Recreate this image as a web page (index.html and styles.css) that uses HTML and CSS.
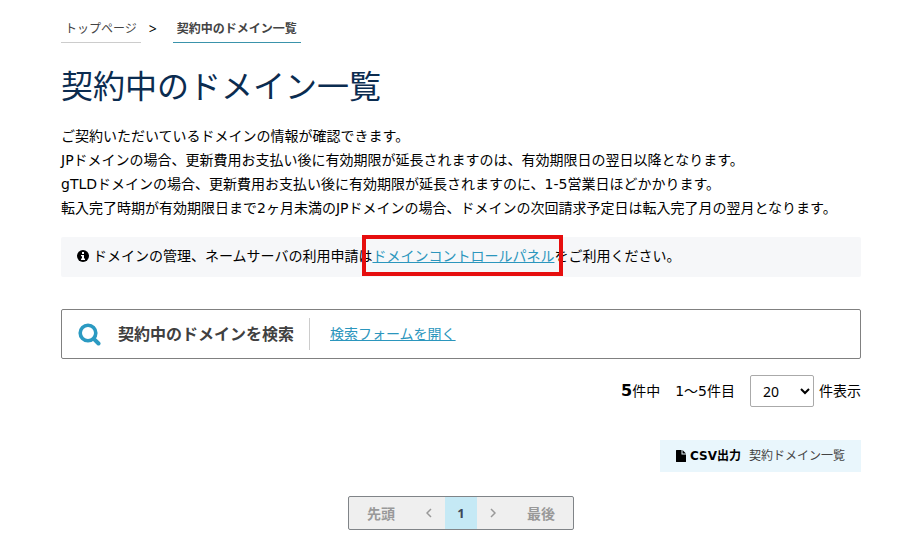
FILE: index.html
```html
<!DOCTYPE html>
<html lang="ja">
<head>
    <meta charset="UTF-8">
    <meta name="viewport" content="width=device-width, initial-scale=1.0">
    <title>契約中のドメイン一覧</title>
    <link rel="stylesheet" href="styles.css">
</head>
<body>
    <main class="container">
        <nav class="breadcrumb">
            <a href="#" class="breadcrumb-item">トップページ</a>
            <span class="breadcrumb-arrow">&gt;</span>
            <a href="#" class="breadcrumb-item current">契約中のドメイン一覧</a>
        </nav>

        <h1 class="title">契約中のドメイン一覧</h1>

        <p class="lead">
            ご契約いただいているドメインの情報が確認できます。<br>
            JPドメインの場合、更新費用お支払い後に有効期限が延長されますのは、有効期限日の翌日以降となります。<br>
            gTLDドメインの場合、更新費用お支払い後に有効期限が延長されますのに、1-5営業日ほどかかります。<br>
            転入完了時期が有効期限日まで2ヶ月未満のJPドメインの場合、ドメインの次回請求予定日は転入完了月の翌月となります。
        </p>

        <div class="notice">
            <svg class="icon-info" viewBox="0 0 12 12" aria-hidden="true">
                <circle cx="6" cy="6" r="6" fill="#000"/>
                <path d="M5 2h2v2H5zM4 5h3v3.600h1V10H4V8.600h1V6.300H4z" fill="#fff"/>
            </svg>
            <p>ドメインの管理、ネームサーバの利用申請は<span class="marked"><a href="#">ドメインコントロールパネル</a></span>をご利用ください。</p>
        </div>

        <section class="search">
            <svg class="icon-search" viewBox="0 0 24 24" aria-hidden="true">
                <circle cx="10" cy="11" r="7.800" fill="none" stroke="#2b9ac2" stroke-width="3.600"/>
                <path d="M15.800 16.800L20.500 21.500" stroke="#2b9ac2" stroke-width="4" stroke-linecap="round"/>
            </svg>
            <h2 class="search-title">契約中のドメインを検索</h2>
            <a href="#" class="search-toggle">検索フォームを開く</a>
        </section>

        <div class="count">
            <span><strong>5</strong>件中</span>
            <span>1～5件目</span>
            <label class="per-page">
                <select>
                    <option>10</option>
                    <option selected>20</option>
                    <option>50</option>
                </select>
                件表示
            </label>
        </div>

        <div class="export">
            <a href="#" class="csv">
                <svg class="icon-file" viewBox="0 0 10 12" aria-hidden="true">
                    <path d="M0 .5Q0 0 .5 0H5.500V4.500H10V11.500Q10 12 9.500 12H.5Q0 12 0 11.500zM6.500 0L10 3.500H6.500z" fill="#000"/>
                </svg>
                <strong>CSV出力</strong>
                <span>契約ドメイン一覧</span>
            </a>
        </div>

        <div class="pager-wrap">
            <div class="pager">
                <button type="button" class="wide">先頭</button>
                <button type="button" aria-label="前へ">
                    <svg viewBox="0 0 6 10"><path d="M5 1L1 5l4 4"/></svg>
                </button>
                <button type="button" class="active">1</button>
                <button type="button" aria-label="次へ">
                    <svg viewBox="0 0 6 10"><path d="M1 1l4 4-4 4"/></svg>
                </button>
                <button type="button" class="wide">最後</button>
            </div>
        </div>
    </main>
</body>
</html>
```

FILE: styles.css
```css
* {
    box-sizing: border-box;
}

body {
    margin: 0;
    background: #fff;
    color: #000;
    font-family: "Noto Sans", "Noto Sans CJK JP", sans-serif;
    font-size: 14px;
    line-height: 24px;
}

h1,
h2,
p {
    margin: 0;
}

a {
    color: #2b96bd;
}

.container {
    padding: 15px 42px 16px 61px;
}

.breadcrumb {
    display: flex;
    align-items: center;
    font-size: 12px;
}

.breadcrumb-item {
    padding: 2px 4px 1px;
    border-bottom: 1px solid #ccc;
    color: #444;
    text-decoration: none;
}

.breadcrumb-item.current {
    border-bottom-color: #3a93ab;
    font-weight: bold;
}

.breadcrumb-arrow {
    width: 32px;
    padding-left: 8px;
    font-size: 14px;
}

.title {
    margin-top: 19px;
    color: #0b2c50;
    font-size: 32px;
    font-weight: normal;
    line-height: 48px;
}

.lead {
    margin-top: 14px;
    font-family: "DejaVu Sans", "Noto Sans CJK JP", sans-serif;
}

.notice {
    display: flex;
    align-items: center;
    gap: 4px;
    margin-top: 17px;
    padding: 7px 16px 9px;
    border-radius: 2px;
    background: #f6f7f9;
}

.icon-info {
    width: 12px;
    height: 12px;
}

.marked {
    position: relative;
}

/* highlight frame around the link */
.marked::after {
    content: "";
    position: absolute;
    inset: -11px -9px -11px -10px;
    border: 4px solid #e60e0e;
    pointer-events: none;
}

.search {
    display: flex;
    align-items: center;
    margin-top: 32px;
    padding: 8px 16px;
    border: 1px solid #808080;
    border-radius: 2px;
}

.icon-search {
    width: 24px;
    height: 24px;
    margin-right: 16px;
}

.search-title {
    padding-right: 15px;
    border-right: 1px solid #ccc;
    color: #404040;
    font-size: 16px;
    line-height: 32px;
}

.search-toggle {
    margin-left: 20px;
}

.count {
    display: flex;
    justify-content: flex-end;
    align-items: center;
    gap: 15px;
    margin-top: 16px;
    font-family: "DejaVu Sans", "Noto Sans CJK JP", sans-serif;
}

.count strong {
    font-size: 16px;
}

.per-page {
    display: flex;
    align-items: center;
    gap: 5px;
}

.per-page select {
    width: 64px;
    height: 32px;
    padding: 0 0 0 8px;
    border: 1px solid #aaa;
    border-radius: 2px;
    background: #fff;
    color: #000;
    font-family: "Noto Sans", "Noto Sans CJK JP", sans-serif;
    font-size: 14px;
}

.export {
    display: flex;
    justify-content: flex-end;
    margin-top: 33px;
}

.csv {
    display: flex;
    align-items: center;
    padding: 4px 16px;
    background: #e9f6fc;
    color: #444;
    font-family: "DejaVu Sans", "Noto Sans CJK JP", sans-serif;
    font-size: 12px;
    text-decoration: none;
}

.csv strong {
    margin: 0 8px 0 4px;
    color: #000;
}

.icon-file {
    width: 10px;
    height: 12px;
}

.pager-wrap {
    display: flex;
    justify-content: center;
    margin-top: 24px;
}

.pager {
    display: flex;
    border: 1px solid #808488;
    border-radius: 2px;
    background: #efefef;
}

.pager button {
    display: flex;
    align-items: center;
    justify-content: center;
    width: 32px;
    height: 32px;
    padding: 0;
    border: 0;
    background: none;
    color: #999;
    font-family: inherit;
    font-size: 14px;
    font-weight: bold;
    cursor: pointer;
}

.pager .wide {
    width: 64px;
}

.pager .active {
    background: #c5e9f5;
    color: #404858;
    font-size: 13px;
}

.pager svg {
    width: 6px;
    height: 10px;
    fill: none;
    stroke: #999;
    stroke-width: 1.500;
}
```
